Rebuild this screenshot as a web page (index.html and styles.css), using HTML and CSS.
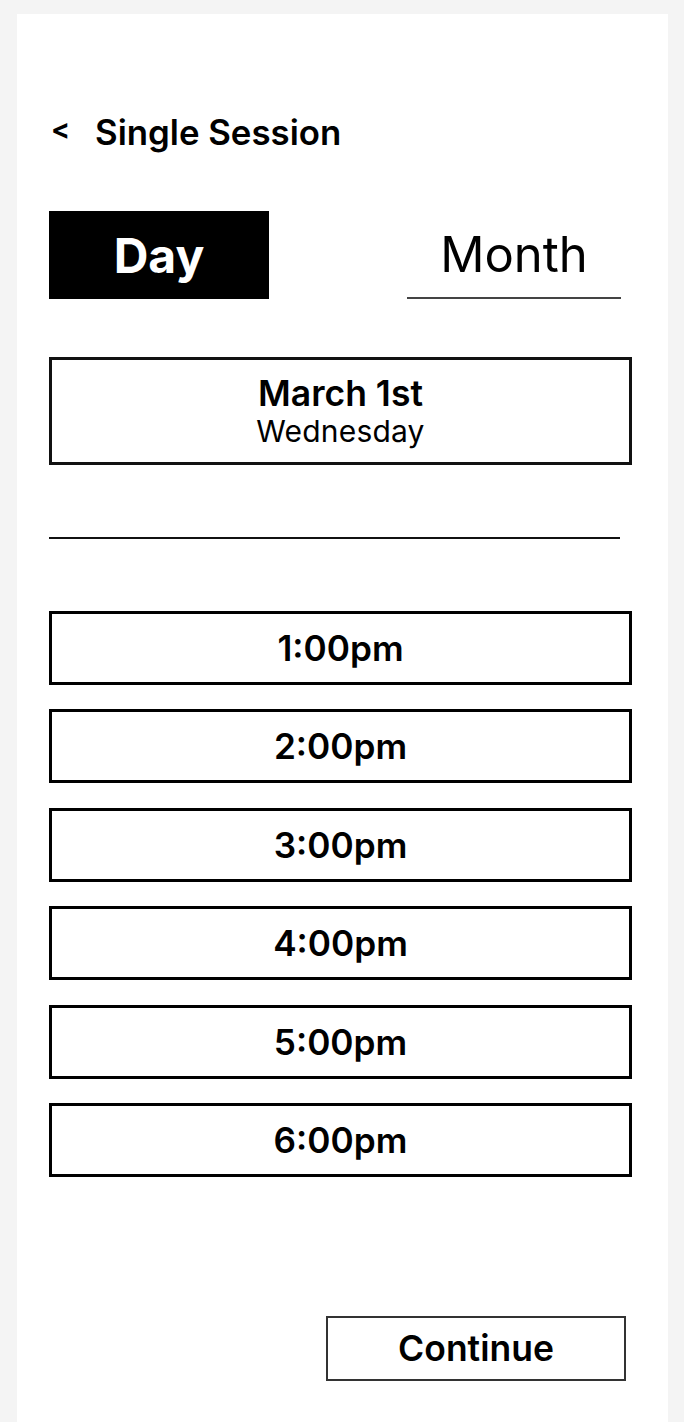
FILE: index.html
```html
<!DOCTYPE html>
<html lang="en">
<head>
<meta charset="utf-8">
<title>Single Session</title>
<link rel="stylesheet" href="styles.css">
</head>
<body>
<main class="card">
  <header class="header">
    <span class="back">&lt;</span>
    <h1 class="title">Single Session</h1>
  </header>
  <div class="tabs">
    <button class="tab tab-active">Day</button>
    <button class="tab tab-month">Month</button>
  </div>
  <div class="date-box">
    <div class="date-main">March 1st</div>
    <div class="date-sub">Wednesday</div>
  </div>
  <hr class="divider">
  <ul class="times">
    <li class="time">1:00pm</li>
    <li class="time">2:00pm</li>
    <li class="time">3:00pm</li>
    <li class="time">4:00pm</li>
    <li class="time">5:00pm</li>
    <li class="time">6:00pm</li>
  </ul>
  <div class="actions">
    <button class="continue">Continue</button>
  </div>
</main>
</body>
</html>
```
FILE: styles.css
```css
* { box-sizing: border-box; }
html, body { margin: 0; padding: 0; }
body {
  background: #f4f4f4;
  font-family: Inter, "Liberation Sans", sans-serif;
  color: #000;
  height: 1422px;
  overflow: hidden;
}
.card {
  margin: 14px 0 0 17px;
  width: 651px;
  height: 1408px;
  background: #fff;
  padding: 98px 36px 0 32px;
}
.header {
  display: flex;
  align-items: center;
  height: 40px;
}
.back {
  font-size: 28px;
  font-weight: 700;
  width: 46px;
  padding-left: 2px;
  margin-top: -6px;
}
.title {
  margin: 0;
  font-size: 34.8px;
  font-weight: 600;
  letter-spacing: 0;
}
.tabs {
  margin-top: 59px;
  display: flex;
  justify-content: space-between;
  padding-right: 11px;
}
.tab {
  font-family: inherit;
  height: 88px;
  border: 0;
  padding: 0;
  background: none;
  color: #000;
  font-size: 48px;
}
.tab-active {
  width: 220px;
  background: #000;
  color: #fff;
  font-weight: 700;
}
.tab-month {
  width: 214px;
  font-size: 49px;
  font-weight: 400;
  border-bottom: 2px solid #444;
}
.date-box {
  margin-top: 58px;
  height: 108px;
  border: 3px solid #111;
  display: flex;
  flex-direction: column;
  align-items: center;
  justify-content: center;
}
.date-main {
  font-size: 35.5px;
  font-weight: 600;
  line-height: 40px;
}
.date-sub {
  font-size: 30px;
  font-weight: 400;
  line-height: 34px;
  letter-spacing: 0.2px;
}
.divider {
  margin: 72px 12px 0 0;
  border: 0;
  border-top: 2px solid #111;
  height: 0;
}
.times {
  list-style: none;
  margin: 72px 0 0 0;
  padding: 0;
  display: flex;
  flex-direction: column;
  gap: 24.4px;
}
.time {
  height: 74px;
  border: 3px solid #000;
  display: flex;
  align-items: center;
  justify-content: center;
  font-size: 35.2px;
  font-weight: 600;
}
.actions {
  margin-top: 139px;
  display: flex;
  justify-content: flex-end;
  padding-right: 6px;
}
.continue {
  font-family: inherit;
  width: 300px;
  height: 65px;
  background: #fff;
  border: 2px solid #333;
  color: #000;
  font-size: 35.5px;
  font-weight: 600;
  padding: 0;
}
```
